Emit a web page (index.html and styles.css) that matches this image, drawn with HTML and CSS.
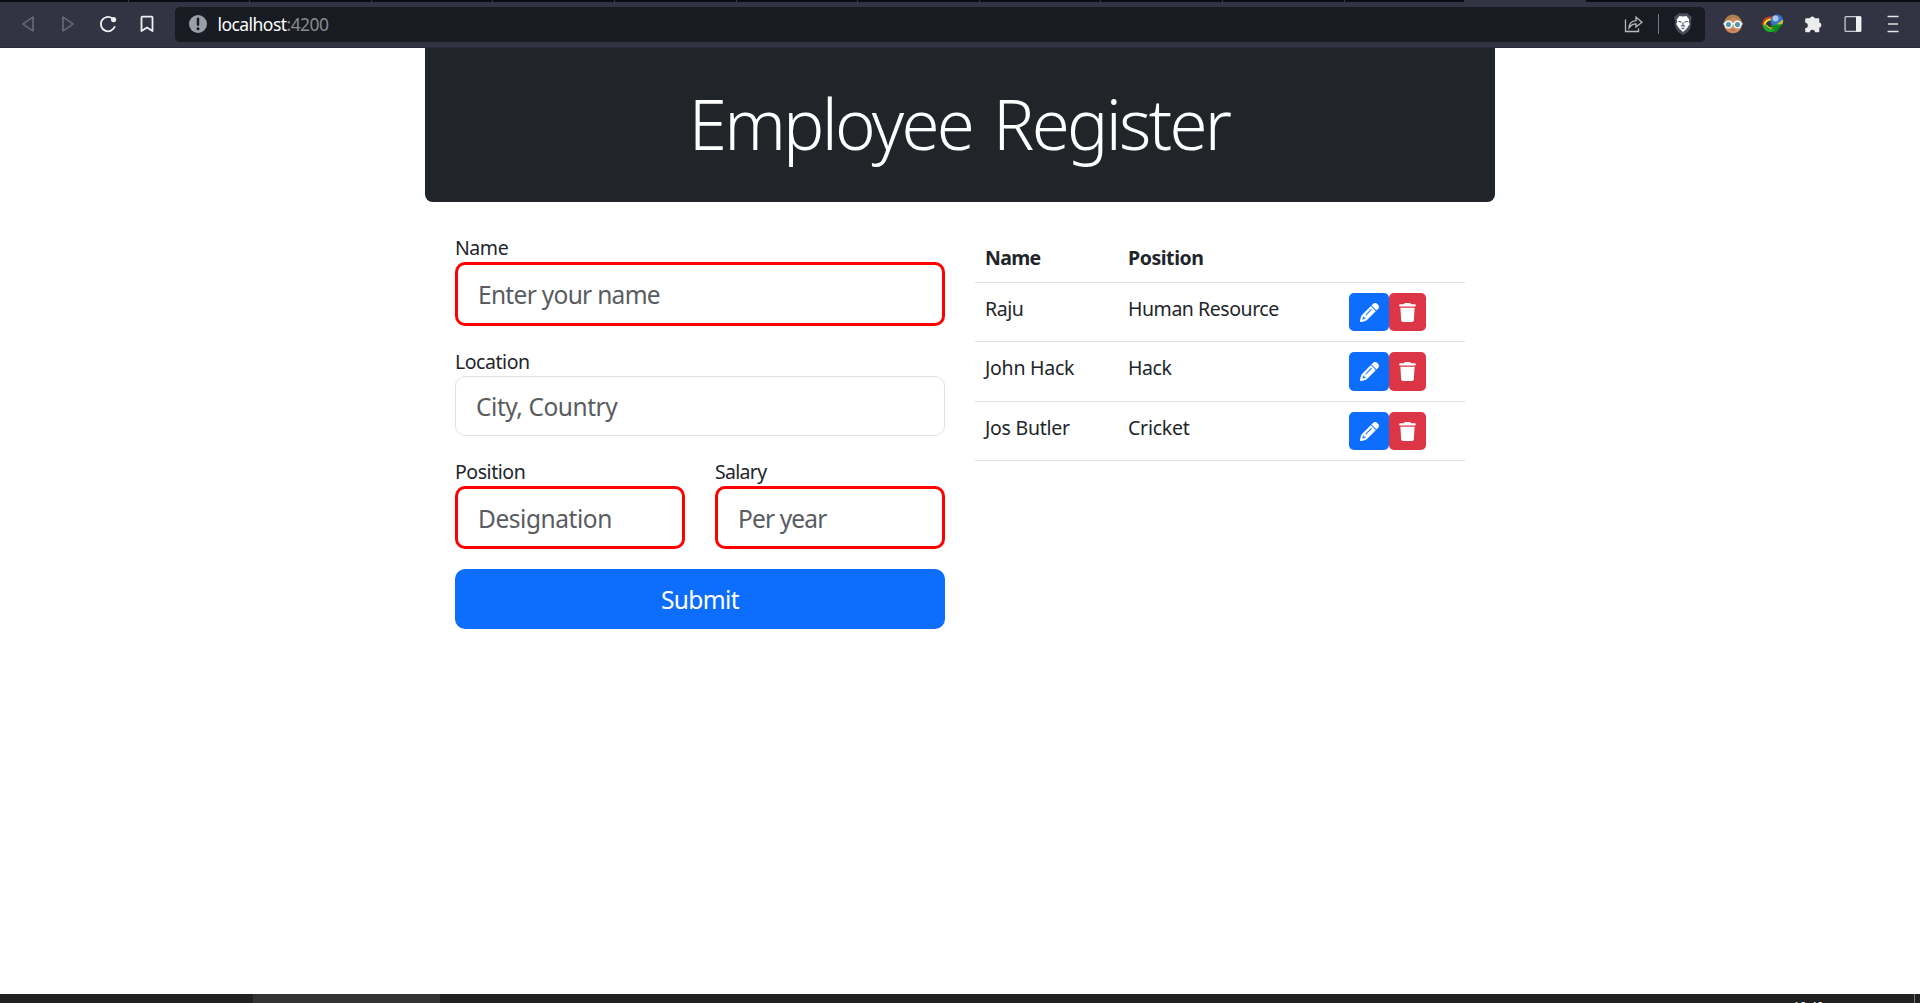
FILE: index.html
```html
<!DOCTYPE html>
<html lang="en">
<head>
<meta charset="utf-8">
<title>Employee Register</title>
<link rel="stylesheet" href="styles.css">
</head>
<body>
<div class="tabstrip">
  <i class="tab"></i><i class="tab"></i><i class="tab"></i><i class="tab"></i><i class="tab"></i><i class="tab"></i><i class="tab"></i><i class="tab"></i><i class="tab"></i><i class="tab"></i><i class="tab"></i><i class="tab tab-last"></i><i class="tab-active"></i>
</div>
<div class="toolbar">
  <div class="nav">
    <svg class="dim" width="16" height="20" viewBox="0 0 16 20"><path d="M13 3v14L3 10z"/></svg>
    <svg class="dim" width="16" height="20" viewBox="0 0 16 20"><path d="M3 3v14l10-7z"/></svg>
    <svg class="bright" width="20" height="20" viewBox="0 0 20 20"><path d="M14.2 4.2A7.2 7.2 0 1 0 16.9 12.3"/><circle class="solid" cx="15.6" cy="5.6" r="2.6"/></svg>
    <svg class="bright" width="16" height="20" viewBox="0 0 16 20"><path d="M2.500 3.600q0-1 1-1h9q1 0 1 1V17L8 13.600 2.500 17z"/></svg>
  </div>
  <div class="address">
    <svg width="18" height="18" viewBox="0 0 18 18"><circle cx="9" cy="9" r="9" fill="#9a9ea8"/><path d="M9 3.6v6.2" stroke="#181b22" stroke-width="2.4" stroke-linecap="round"/><circle cx="9" cy="13.7" r="1.5" fill="#181b22"/></svg>
    <span class="url">localhost<span class="port">:4200</span></span>
    <svg class="share" width="20" height="18" viewBox="0 0 20 18"><path d="M1.5 4.5v12h13v-3M5 13c.3-5 3-7.2 7-7.4V2.2l6 5-6 4.8V8.8C9 8.7 7 10 5 13z"/></svg>
    <i class="divider"></i>
    <svg width="20" height="24" viewBox="0 0 20 24"><path d="M6 1.2h8l2.5 2L19 5l-1 3.5.3 4L17 17l-2.5 3.3L10 23l-4.5-2.7L3 17l-1.300-4.500L2 8.500 1 5l2.500-1.800z" fill="#4a4d5e"/><path d="M6.500 4 10 4.600l3.500-.6 2.700 3.500-.5 2.500 1 2-2.200 3.500-1.200 1.500L10 20 6.700 17l-1.200-1.500L3.300 12l1-2-.5-2.500z" fill="#fff"/><path d="M5.500 9.300l3 1M14.500 9.300l-3 1M10 10.500v3.500M7.800 14.300 10 13.500l2.200.8M8.700 16.800l1.300-.7 1.300.7" fill="none" stroke="#4a4d5e" stroke-width="1.100"/></svg>
  </div>
  <div class="extensions">
    <svg width="20" height="20" viewBox="0 0 20 20"><circle cx="10" cy="10.300" r="9" fill="#d08a60"/><path d="M1 9.500a9 9 0 0 1 18 0l-3.500-3.500-5-2.500L5 6z" fill="#a8814f"/><path d="M.5 9.800h19" stroke="#f4f8fa" stroke-width="2"/><circle cx="5.500" cy="10.500" r="3.300" fill="#4f9aa8" stroke="#f4f8fa" stroke-width="1.500"/><circle cx="14.500" cy="10.500" r="3.300" fill="#4f9aa8" stroke="#f4f8fa" stroke-width="1.500"/><path d="M8 16h4" stroke="#b0603f"/></svg>
    <svg width="22" height="20" viewBox="0 0 22 20"><path d="M1.800 12C-.5 6 6 1.500 12 4.500" fill="none" stroke="#e33a1c" stroke-width="2"/><path d="M3.200 12.500C1.500 7.500 7 4 12 6.500" fill="none" stroke="#f3e02a" stroke-width="2"/><path d="M2 11c1 5 6 7 11 4.500" fill="none" stroke="#1fae2a" stroke-width="3"/><path d="M4.500 11c1 3 4 4 8 2" fill="none" stroke="#e6d824" stroke-width="1.200"/><circle cx="14.800" cy="6.800" r="6.300" fill="#3b72c9"/><circle cx="13.500" cy="4.500" r="3" fill="#a9c6e6"/><path d="M15 10l6-4.500c.8 4-1.500 6.500-5 7z" fill="#c9c42c"/><path d="M8 11.500l13-1.500-3.500 4-4.500 5.500-1-4z" fill="#118a1c"/></svg>
    <svg width="20" height="20" viewBox="0 0 20 20"><path d="M2.200 5.300q0-1 1-1h3.600a2.600 2.600 0 0 1 5-0h3.500q1 0 1 1V8.600a2.600 2.600 0 0 1 0 5.100v3.600q0 1-1 1h-3.300a2.600 2.600 0 0 0-5.200 0H3.200q-1 0-1-1V14a2.600 2.600 0 0 0 0-5.200z" fill="#ececee"/></svg>
    <svg width="20" height="20" viewBox="0 0 20 20"><rect x="2.100" y="2.600" width="15.800" height="14.800" rx="1" fill="none" stroke="#c9cad0" stroke-width="1.300"/><path d="M13 2.500h5v15h-5z" fill="#f1f1f3"/></svg>
    <svg width="20" height="20" viewBox="0 0 20 20"><path d="M4.500 2.500h11M5 10h10M4.500 17.500h11" stroke="#e4e4e8" stroke-width="1.600"/></svg>
  </div>
</div>

<svg class="defs" width="0" height="0">
  <symbol id="pencil" viewBox="0 0 512 512"><path d="M410.300 231l11.300-11.300-33.900-33.900-62.100-62.100L291.700 89.800l-11.300 11.300-22.600 22.600L58.600 322.900c-10.400 10.400-18 23.300-22.200 37.400L1 480.700c-2.500 8.400-.2 17.500 6.100 23.700s15.300 8.500 23.700 6.100l120.300-35.400c14.100-4.200 27-11.800 37.400-22.200L387.700 253.700 410.300 231zM160 399.400l-9.100 22.700c-4 3.100-8.500 5.400-13.300 6.900L59.400 452l23-78.100c1.400-4.900 3.800-9.400 6.900-13.300l22.700-9.100v32c0 8.800 7.200 16 16 16h32zM362.700 18.700L348.300 33.200 325.700 55.800 314.300 67.100l33.900 33.900 62.100 62.100 33.900 33.900 11.300-11.300 22.600-22.600 14.500-14.500c25-25 25-65.500 0-90.500L453.300 18.700c-25-25-65.500-25-90.500 0zm-47.400 168l-144 144c-6.200 6.200-16.400 6.200-22.600 0s-6.200-16.400 0-22.600l144-144c6.200-6.200 16.400-6.200 22.600 0s6.200 16.400 0 22.600z"/></symbol>
  <symbol id="trash" viewBox="0 0 448 512"><path d="M135.200 17.700L128 32H32C14.300 32 0 46.300 0 64S14.300 96 32 96H416c17.700 0 32-14.300 32-32s-14.300-32-32-32H320l-7.200-14.300C307.400 6.800 296.300 0 284.200 0H163.800c-12.100 0-23.200 6.800-28.600 17.700zM416 128H32L53.200 467c1.600 25.300 22.600 45 47.900 45H346.900c25.300 0 46.300-19.700 47.900-45L416 128z"/></symbol>
</svg>

<main class="container">
  <header class="banner"><h1>Employee Register</h1></header>
  <div class="content">
    <form class="form">
      <div class="field">
        <label for="name">Name</label>
        <input id="name" class="invalid tall wide-text" placeholder="Enter your name">
      </div>
      <div class="field">
        <label for="location">Location</label>
        <input id="location" placeholder="City, Country">
      </div>
      <div class="pair">
        <div class="field">
          <label for="position">Position</label>
          <input id="position" class="invalid" placeholder="Designation">
        </div>
        <div class="field">
          <label for="salary" class="tight">Salary</label>
          <input id="salary" class="invalid tight-text" placeholder="Per year">
        </div>
      </div>
      <button type="button" class="submit">Submit</button>
    </form>
    <div class="table">
      <div class="row head"><b class="tight">Name</b><b>Position</b></div>
      <div class="row"><span>Raju</span><span>Human Resource</span><div class="actions"><button type="button" class="edit"><svg><use href="#pencil"/></svg></button><button type="button" class="delete"><svg><use href="#trash"/></svg></button></div></div>
      <div class="row mid"><span class="loose">John Hack</span><span>Hack</span><div class="actions"><button type="button" class="edit"><svg><use href="#pencil"/></svg></button><button type="button" class="delete"><svg><use href="#trash"/></svg></button></div></div>
      <div class="row"><span class="loose">Jos Butler</span><span class="loose">Cricket</span><div class="actions"><button type="button" class="edit"><svg><use href="#pencil"/></svg></button><button type="button" class="delete"><svg><use href="#trash"/></svg></button></div></div>
    </div>
  </div>
</main>

<footer class="taskbar"><i class="task"></i><span class="clock">10:40</span><i class="peek"></i></footer>
</body>
</html>
```
FILE: styles.css
```css
* { box-sizing: border-box; }
body {
  margin: 0;
  height: 1003px;
  overflow: hidden;
  display: flex;
  flex-direction: column;
  background: #fff;
  color: #212529;
  font: 19.5px/30px "Noto Sans", "Open Sans", sans-serif;
  letter-spacing: -0.45px;
}
svg { display: block; flex: none; }
.defs { position: absolute; }

/* browser chrome */
.tabstrip { display: flex; height: 2px; padding-left: 7px; background: #0b0b14; }
.tab { flex: none; width: 121.600px; border-right: 1px solid #3a3a42; }
.tab-last { width: 119.400px; border: 0; }
.tab-active { width: 122px; background: #323443; }
.toolbar {
  display: flex;
  align-items: center;
  height: 46px;
  padding-bottom: 1px;
  background: #323443;
  border-bottom: 1px solid #2b2c39;
}
.nav { display: flex; align-items: center; width: 175px; padding-left: 20px; gap: 24px; }
.nav svg { fill: none; stroke-linejoin: round; }
.nav svg:nth-child(3) { margin-right: -3px; margin-left: -2px; }
.dim { stroke: #6c6e7b; stroke-width: 1.5; }
.bright { stroke: #f0f0f2; stroke-width: 1.8; }
.solid { fill: #f0f0f2; stroke: none; }
.address {
  display: flex;
  align-items: center;
  width: 1530px;
  height: 35px;
  padding: 0 12px 0 13.500px;
  background: #181b22;
  border-radius: 5px;
}
.url { flex: 1; padding-left: 11px; color: #fff; font-size: 17.500px; letter-spacing: -0.550px; }
.port { color: #898b90; }
.share { fill: none; stroke: #b9bac0; stroke-width: 1.300; }
.divider { width: 1px; height: 20px; margin: 0 14px 0 14px; background: #777982; }
.extensions { display: flex; align-items: center; padding-left: 17.500px; gap: 20px; }
.extensions svg:nth-child(2) { margin: 0 -1px; }

/* page */
.container { flex: 1; width: 1070px; margin: 0 auto; }
.banner {
  height: 154px;
  padding: 33px 2px 0 0;
  background: #212529;
  color: #fff;
  border-radius: 0 0 7.500px 7.500px;
  text-align: center;
}
h1 { margin: 0; font-size: 69px; font-weight: 300; line-height: 84px; letter-spacing: -2.700px; word-spacing: 5.500px; }
.content { display: grid; grid-template-columns: 490px 490px; gap: 30px; padding: 30px; }
.form { display: flex; flex-direction: column; gap: 20px; }
.field { display: flex; flex-direction: column; }
label { height: 30px; padding-top: 1px; }
.pair { display: grid; grid-template-columns: 1fr 1fr; gap: 30px; }
.tight { letter-spacing: -0.700px; }
.loose { letter-spacing: -0.250px; }
input {
  width: 100%;
  height: 60px;
  padding: 1px 20px 0 20px;
  border: 1px solid #dee2e6;
  border-radius: 10px;
  background: #fff;
  font: inherit;
  font-size: 24.500px;
  letter-spacing: -0.450px;
}
input::placeholder { color: #595c5f; opacity: 1; }
.invalid { height: 63px; padding-top: 2px; border: 3px solid #f00; }
.tall { height: 64px; padding-top: 1px; }
.wide-text { letter-spacing: -0.700px; }
.tight-text { letter-spacing: -0.850px; }
.submit {
  height: 60px;
  padding: 1px 0 0;
  border: 0;
  border-radius: 10px;
  background: #0d6efd;
  color: #fff;
  font: inherit;
  font-size: 24.500px;
  letter-spacing: -0.600px;
}
.row {
  display: grid;
  grid-template-columns: 143px 221px 126px;
  height: 59px;
  padding-top: 10px;
  border-bottom: 1px solid #dee2e6;
}
.row > * { padding: 1px 0 0 10px; }
.row .actions { display: flex; height: 38px; padding-top: 0; }
.head { height: 51px; }
.mid { height: 60px; }
.mid .actions { height: 39px; }
.actions button { display: grid; place-items: center; padding: 0; border: 0; border-radius: 5px; }
.edit { width: 40px; background: #0d6efd; }
.delete { width: 37px; background: #dc3545; }
.actions svg { width: 19px; height: 19px; fill: #fff; }
.edit svg { stroke: #fff; stroke-width: 9px; }
.delete svg { width: 17px; }

/* desktop taskbar */
.taskbar { display: flex; height: 9px; padding-left: 253px; background: #202020; overflow: hidden; }
.task { width: 187px; background: #333; }
.clock { margin-left: 1353px; width: 121px; padding-top: 5px; color: #fff; font-size: 12px; line-height: 16px; letter-spacing: 0; }
.peek { width: 1px; background: #777; }
```
